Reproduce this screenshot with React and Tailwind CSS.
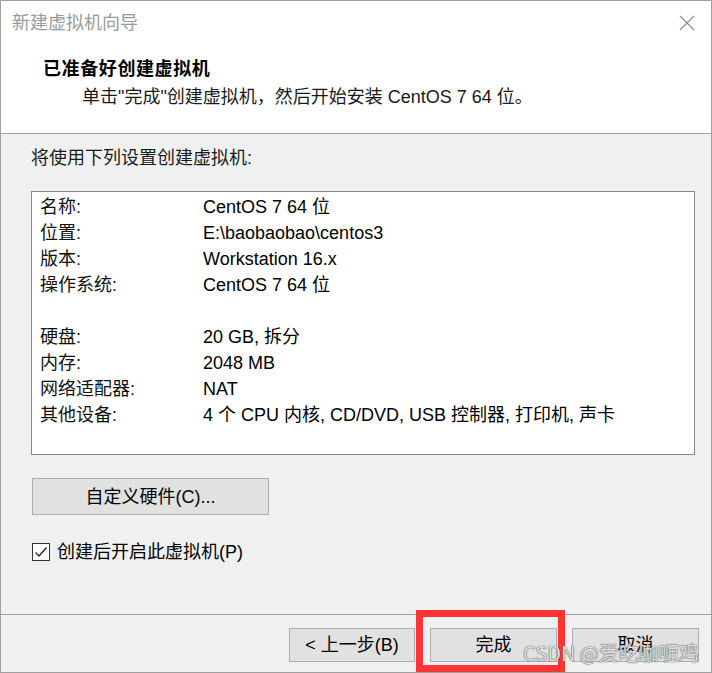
import React from "react";

const rows = [
    ["名称:", "CentOS 7 64 位"],
    ["位置:", "E:\\baobaobao\\centos3"],
    ["版本:", "Workstation 16.x"],
    ["操作系统:", "CentOS 7 64 位"],
    null,
    ["硬盘:", "20 GB, 拆分"],
    ["内存:", "2048 MB"],
    ["网络适配器:", "NAT"],
    ["其他设备:", "4 个 CPU 内核, CD/DVD, USB 控制器, 打印机, 声卡"],
];

function WinButton({ children, className = "" }) {
    return (
        <button
            className={`h-[34px] bg-[#e1e1e1] border border-[#adadad] text-[18px] leading-none text-black flex items-center justify-center ${className}`}
        >
            {children}
        </button>
    );
}

export default function App() {
    return (
        <div className="relative w-[712px] h-[673px] overflow-hidden border border-[#a0a0a0] bg-[#f0f0f0] flex flex-col font-['Liberation_Sans','Noto_Sans_CJK_SC',sans-serif] text-black">
            {/* Header */}
            <div className="h-[133px] shrink-0 bg-white border-b border-[#a0a0a0]">
                <div className="h-[44px] flex items-center justify-between pl-[11px] pr-[16px]">
                    <span className="text-[18px] leading-[26px] text-[#9a9a9a]">
                        新建虚拟机向导
                    </span>
                    <svg width="16" height="16" viewBox="0 0 16 16">
                        <path
                            d="M1 1 L15 15 M15 1 L1 15"
                            stroke="#8a8a8a"
                            strokeWidth="1.1"
                            fill="none"
                        />
                    </svg>
                </div>
                <div className="mt-[11px] pl-[42px] text-[18px] leading-[26px] font-bold tracking-[0.6px]">
                    已准备好创建虚拟机
                </div>
                <div className="mt-[2px] pl-[81px] text-[18px] leading-[26px] text-[#1a1a1a]">
                    单击"完成"创建虚拟机，然后开始安装 CentOS 7 64 位。
                </div>
            </div>

            {/* Body */}
            <div className="flex-1 pl-[30px] pt-[11px]">
                <div className="text-[18px] leading-[26px] text-[#1a1a1a]">
                    将使用下列设置创建虚拟机:
                </div>
                <div className="mt-[20px] w-[664px] h-[264px] bg-white border border-[#828790] pt-[2px] pl-[8px]">
                    {rows.map((row, i) =>
                        row ? (
                            <div
                                key={i}
                                className="grid grid-cols-[163px_1fr] h-[26px] items-center text-[18px] leading-[26px]"
                            >
                                <span className="text-[#111]">{row[0]}</span>
                                <span>{row[1]}</span>
                            </div>
                        ) : (
                            <div key={i} className="h-[26px]" />
                        )
                    )}
                </div>
                <WinButton className="mt-[23px] ml-[1px] w-[237px] h-[37px]">
                    自定义硬件(C)...
                </WinButton>
                <div className="mt-[24px] ml-[1px] h-[26px] flex items-center gap-[7px]">
                    <div className="w-[18px] h-[18px] bg-white border border-[#333] flex items-center justify-center">
                        <svg width="14" height="14" viewBox="0 0 14 14">
                            <path
                                d="M1.5 7.5 L5 11 L12.5 2.5"
                                stroke="#222"
                                strokeWidth="1.3"
                                fill="none"
                            />
                        </svg>
                    </div>
                    <span className="text-[18px] leading-[26px]">
                        创建后开启此虚拟机(P)
                    </span>
                </div>
            </div>

            {/* Footer */}
            <div className="h-[58px] shrink-0 border-t border-[#a0a0a0] flex justify-end items-start gap-[15px] pt-[13px] pr-[12px]">
                <WinButton className="w-[126px]">&lt; 上一步(B)</WinButton>
                <WinButton className="w-[127px]">完成</WinButton>
                <WinButton className="w-[127px]">取消</WinButton>
            </div>

            {/* red annotation box */}
            <div className="absolute left-[415px] top-[609px] w-[149px] h-[62px] border-[7px] border-[#ff3535]" />

            {/* watermark */}
            <div className="absolute left-[522px] top-[638px] text-[20px] leading-[28px] font-['Noto_Sans_CJK_SC',sans-serif] text-[#dedede] [text-shadow:0_0_1px_#555,0_0_1px_#555]">
                CSDN @爱吃咖喱鸡
            </div>
        </div>
    );
}
